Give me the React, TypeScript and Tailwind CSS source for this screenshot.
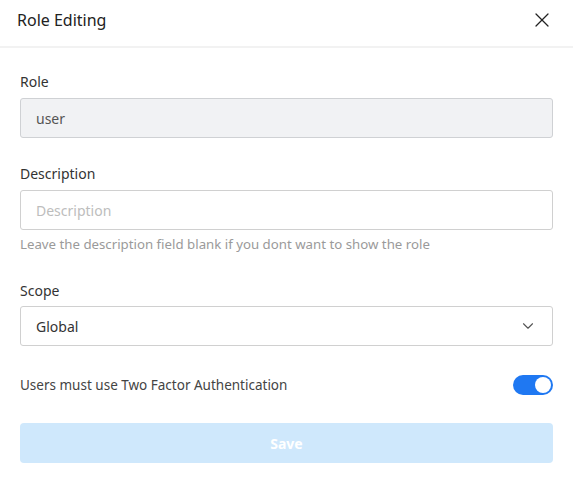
import React, { useState } from 'react';
import { X, ChevronDown } from 'lucide-react';

const App: React.FC = () => {
  const [twoFactor, setTwoFactor] = useState(true);

  return (
    <div className="w-[573px] h-[477px] bg-white text-[#333] font-['Noto_Sans',sans-serif]">
      {/* Header */}
      <div className="h-[48px] flex items-start justify-between pl-[17px] pr-[19px] pt-[9px] border-b-2 border-[#f2f2f2]">
        <h2 className="text-[16px] leading-[22px] text-[#222]">Role Editing</h2>
        <button className="-mt-[1px] text-[#222]">
          <X className="w-6 h-6" strokeWidth={1.25} />
        </button>
      </div>

      <div className="px-5 pt-[24px]">
        {/* Role */}
        <label className="block text-[14px] leading-[20px] mb-[6px]">Role</label>
        <div className="h-[40px] flex items-center px-[15px] bg-[#f1f2f4] border border-[#cfd1d4] rounded-[3px] text-[14px] text-[#555]">
          user
        </div>

        {/* Description */}
        <label className="block text-[14px] leading-[20px] mt-[26px] mb-[6px]">Description</label>
        <input
          className="w-full h-[40px] px-[15px] border border-[#d0d0d0] rounded-[3px] text-[14px] placeholder:text-[#bdbdbd] outline-none"
          placeholder="Description"
        />
        <p className="mt-[5px] text-[13.25px] leading-[18px] text-[#9a9a9a]">
          Leave the description field blank if you dont want to show the role
        </p>

        {/* Scope */}
        <label className="block text-[14px] leading-[20px] mt-[28px] mb-[5px]">Scope</label>
        <div className="h-[40px] flex items-center justify-between pl-[15px] pr-[15px] border border-[#d0d0d0] rounded-[3px] text-[14px] text-[#333]">
          <span>Global</span>
          <ChevronDown className="w-[18px] h-[18px] text-[#555]" strokeWidth={1.5} />
        </div>

        {/* Two factor */}
        <div className="mt-[29px] flex items-center justify-between">
          <span className="text-[13.5px] leading-[20px] text-[#444]">Users must use Two Factor Authentication</span>
          <button
            onClick={() => setTwoFactor(!twoFactor)}
            className={`w-[40px] h-[20px] rounded-full flex items-center px-[2px] ${twoFactor ? 'bg-[#1f78f2] justify-end' : 'bg-[#ccc] justify-start'}`}
          >
            <span className="w-[16px] h-[16px] rounded-full bg-white" />
          </button>
        </div>

        {/* Save */}
        <button className="mt-[28px] w-full h-[40px] rounded-[4px] bg-[#cfe8fc] text-white text-[14px] font-bold">
          Save
        </button>
      </div>
    </div>
  );
};

export default App;
